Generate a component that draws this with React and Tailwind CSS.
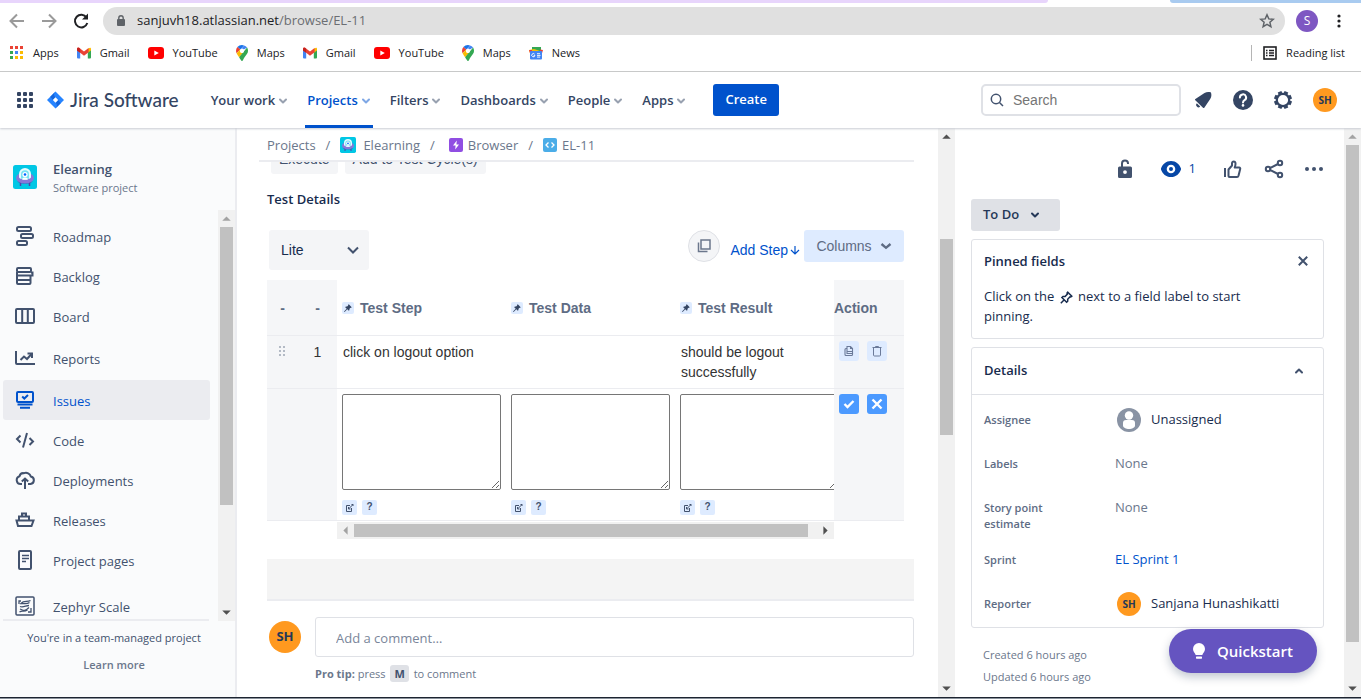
import React from 'react';

/* ---------- shared pieces ---------- */

function Svg({ size = 20, className = '', children, ...rest }) {
  return (
    <svg
      width={size}
      height={size}
      viewBox={`0 0 ${size} ${size}`}
      fill="none"
      stroke="currentColor"
      strokeWidth="2"
      aria-hidden="true"
      className={`shrink-0 ${className}`}
      {...rest}
    >
      {children}
    </svg>
  );
}

function Chevron({ className = '', up = false }) {
  return (
    <Svg size={10} className={className} strokeLinecap="round" strokeLinejoin="round">
      <path d={up ? 'M2 6.5 5 3.5 8 6.5' : 'M2 3.5 5 6.5 8 3.5'} />
    </Svg>
  );
}

function Arrow({ dir, dim }) {
  const points = { up: '4,10 12,10 8,6', down: '4,6 12,6 8,10', left: '10,4 10,12 6,8', right: '6,4 6,12 10,8' };
  return (
    <svg width="17" height="17" viewBox="0 0 16 16" className={dim ? 'shrink-0 text-[#a3a3a3]' : 'shrink-0 text-[#505050]'} aria-hidden="true">
      <polygon points={points[dir]} fill="currentColor" />
    </svg>
  );
}

function ScrollBar({ before, thumb, after, horizontal = false, dimStart = false }) {
  return (
    <div className={horizontal ? 'flex h-[17px] bg-[#f1f1f1]' : 'flex w-[17px] shrink-0 flex-col bg-[#f1f1f1]'}>
      <Arrow dir={horizontal ? 'left' : 'up'} dim={dimStart} />
      <div style={{ flexGrow: before }} />
      <div style={{ flexGrow: thumb }} className={horizontal ? 'my-0.5 bg-[#c1c1c1]' : 'mx-0.5 bg-[#c1c1c1]'} />
      <div style={{ flexGrow: after }} />
      <Arrow dir={horizontal ? 'right' : 'down'} />
    </div>
  );
}

function Ufo({ className }) {
  return (
    <svg viewBox="0 0 24 24" className={`shrink-0 ${className}`} aria-hidden="true">
      <rect width="24" height="24" rx="2.5" fill="#00c7e5" />
      <path d="M7.500 17v4M16.500 17v4" stroke="#5243aa" strokeWidth="1.500" />
      <ellipse cx="12" cy="13" rx="9" ry="5.500" fill="#8777d9" />
      <path d="M4.500 16c3 3.500 12 3.500 15 0-1 4-14 4-15 0z" fill="#5243aa" />
      <path d="M6 12.500V9a6 6 0 0 1 12 0v3.500c-2 2.800-10 2.800-12 0z" fill="#e6fcff" />
      <path d="M8 13.500V9.300a4 4 0 0 1 8 0v4.200c-2 1.200-6 1.200-8 0z" fill="#79e2f2" />
      <circle cx="12" cy="9.500" r="2.600" fill="#fff" />
      <circle cx="12" cy="9.500" r="1.300" fill="#0065ff" />
      <path d="M9 14.200c.5-2.200 5.500-2.200 6 0-1.500.8-4.500.8-6 0z" fill="#fff" />
    </svg>
  );
}

function Avatar({ className = 'size-6 text-[10px]' }) {
  return (
    <span className={`flex shrink-0 items-center justify-center rounded-full bg-[#ff991f] font-bold text-[#253858] ${className}`}>SH</span>
  );
}

/* ---------- browser chrome ---------- */

const GmailIcon = () => (
  <svg width="14" height="12" viewBox="0 0 14 11" aria-hidden="true">
    <path d="M0 1.500V10a1 1 0 0 0 1 1h2.200V5z" fill="#4285f4" />
    <path d="M14 1.500V10a1 1 0 0 1-1 1h-2.200V5z" fill="#34a853" />
    <path d="M10.800 1.200 13 .2c.6 0 1 .5 1 1.300v1.400L10.800 5.300z" fill="#fbbc04" />
    <path d="M0 2.900V1.500C0 .2 1.400-.3 2.400.5L7 4l4.600-3.500v4.200L7 8.200 3.200 5.300z" fill="#ea4335" />
    <path d="M0 2.900V1.500C0 .5 1 0 2 .3l1.200.9v4.100z" fill="#c5221f" />
  </svg>
);
const YouTubeIcon = () => (
  <svg width="16" height="12" viewBox="0 0 16 12" aria-hidden="true">
    <rect width="16" height="12" rx="3" fill="#f00" />
    <path d="M6.300 3.400v5.200L10.800 6z" fill="#fff" />
  </svg>
);
const MapsIcon = () => (
  <svg width="12" height="16" viewBox="0 0 12 16" aria-hidden="true">
    <path d="M6 0a6 6 0 0 0-4.600 2.100L4.300 4.500 8 .4A6 6 0 0 0 6 0z" fill="#1a73e8" />
    <path d="M1.400 2.100A6 6 0 0 0 .6 8.300L4.300 4.500z" fill="#ea4335" />
    <path d="M8 .4 4.300 4.500a2.300 2.300 0 0 1 3.500 0l3.300-1.900A6 6 0 0 0 8 .4z" fill="#4285f4" />
    <path d="M.6 8.300c.6 1.500 1.600 2.600 2.500 3.900l4.600-4.700a2.300 2.300 0 0 1-3.400-3z" fill="#fbbc04" />
    <path d="M11.100 2.600 3.100 12.200c1.300 1.900 2 3.800 2.900 3.800 1 0 1.200-2 2.700-4C10.200 9.900 12 8.400 12 6a6 6 0 0 0-.9-3.400z" fill="#34a853" />
    <circle cx="6" cy="6" r="2" fill="#fff" />
  </svg>
);
const NewsIcon = () => (
  <svg width="14" height="14" viewBox="0 0 14 14" aria-hidden="true">
    <rect x="3" y="1" width="9" height="5" fill="#34a853" />
    <path d="M0 4l5-1 6 2v2H1z" fill="#fbbc04" />
    <path d="M0 4l3 0v5H1.500zM11 3.500l3 .5-1.500 5H11z" fill="#ea4335" />
    <rect x="1" y="5" width="12" height="8.500" rx="1" fill="#4285f4" />
    <path d="M5.600 8.200a1.600 1.600 0 1 0 .3 1.400H4.700" stroke="#fff" fill="none" />
    <path d="M8 7.700h3M8 9.400h3.500M8 11.100h3" stroke="#fff" strokeWidth=".9" />
  </svg>
);
const AppsIcon = () => (
  <svg width="14" height="14" viewBox="0 0 14 14" aria-hidden="true">
    {['#ea4335', '#ea4335', '#ea4335', '#34a853', '#4285f4', '#fbbc04', '#34a853', '#fbbc04', '#fbbc04'].map((c, i) => (
      <rect key={i} x={(i % 3) * 5} y={Math.floor(i / 3) * 5} width="3" height="3" fill={c} />
    ))}
  </svg>
);

const BOOKMARKS = [
  ['Apps', AppsIcon],
  ['Gmail', GmailIcon],
  ['YouTube', YouTubeIcon],
  ['Maps', MapsIcon],
  ['Gmail', GmailIcon],
  ['YouTube', YouTubeIcon],
  ['Maps', MapsIcon],
  ['News', NewsIcon],
];

function BrowserChrome() {
  return (
    <div className="shrink-0 border-b border-[#c9c9c9] bg-white">
      <div className="flex h-[3px] justify-between">
        <div className="w-[77%] rounded-br-lg bg-[#e8d5fc]" />
        <div className="w-[14%] rounded-bl-lg bg-[#a9cbf0]" />
      </div>
      <div className="mt-1 flex h-7 items-center">
        <div className="flex w-[103px] shrink-0 gap-3 pl-[7px]">
          <button aria-label="Back" className="text-[#9a9a9a]">
            <Svg><path d="M17 10H4M10 3.500 3.500 10l6.500 6.500" /></Svg>
          </button>
          <button aria-label="Forward" className="text-[#9a9a9a]">
            <Svg><path d="M3 10h13M10 3.500l6.500 6.500-6.500 6.500" /></Svg>
          </button>
          <button aria-label="Reload" className="text-[#202124]">
            <Svg>
              <path d="M15.500 6.500A6.300 6.300 0 1 0 16.300 12" />
              <path d="M17 2.500v6h-6z" fill="currentColor" stroke="none" />
            </Svg>
          </button>
        </div>
        <div className="flex h-7 flex-1 items-center rounded-full bg-[#e0e0e0] px-2.5 text-[13px] text-[#6b6e72]">
          <Svg size={16} className="mr-2 text-[#5f6368]">
            <rect x="4" y="6" width="8" height="7" rx="1" fill="currentColor" stroke="none" />
            <path d="M5.800 7V5a2.200 2.200 0 0 1 4.400 0v2" strokeWidth="1.400" />
          </Svg>
          <span className="text-[#202124]">sanjuvh18.atlassian.net</span>/browse/EL-11
          <button aria-label="Bookmark this page" className="ml-auto text-[#5f6368]">
            <Svg size={16} strokeWidth="1.500">
              <path d="M8 1.800l1.800 4.100 4.500.4-3.400 3 1 4.400L8 11.400l-3.900 2.300 1-4.400-3.400-3 4.500-.4z" />
            </Svg>
          </button>
        </div>
        <div className="flex w-[76px] shrink-0 items-center pl-[11px]">
          <span className="flex size-[22px] items-center justify-center rounded-full bg-[#7e57c2] text-xs text-white">S</span>
          <button aria-label="Menu" className="ml-[13px] text-[#202124]">
            <Svg size={16}>
              <g fill="currentColor" stroke="none"><circle cx="8" cy="3" r="1.600" /><circle cx="8" cy="8" r="1.600" /><circle cx="8" cy="13" r="1.600" /></g>
            </Svg>
          </button>
        </div>
      </div>
      <div className="flex h-9 items-center pr-4 pl-2.5 text-[11px] text-[#202124]">
        <div className="flex items-center gap-[18px]">
          {BOOKMARKS.map(([name, Icon], i) => (
            <a key={i} href="#" className="flex items-center gap-[9px]"><Icon />{name}</a>
          ))}
        </div>
        <div className="ml-auto flex h-4 items-center border-l border-[#b5b5b5] pl-[11px]">
          <Svg size={14} className="mr-[9px]">
            <rect x="1" y="1" width="12" height="12" strokeWidth="1.600" />
            <path d="M3 4.500h1.500M3 7h1.500M3 9.500h1.500M6 4.500h5M6 7h5M6 9.500h5" strokeWidth="1.300" />
          </Svg>
          Reading list
        </div>
      </div>
    </div>
  );
}

/* ---------- product header ---------- */

function Header() {
  return (
    <header className="relative z-10 flex h-14 shrink-0 items-center bg-white pr-6 pl-[17px] text-[#344563] shadow-[0_1px_2px_#c9ccd4]">
      <button aria-label="Switch product">
        <svg width="16" height="16" viewBox="0 0 16 16" fill="currentColor" aria-hidden="true">
          {[0, 6, 12].map((y) => [0, 6, 12].map((x) => <rect key={`${x}-${y}`} x={x} y={y} width="4" height="4" rx="1" />))}
        </svg>
      </button>
      <a href="#" className="ml-3.5 flex items-center gap-1.5 font-[Lato] text-[19px] leading-6 font-medium text-[#344563]">
        <svg width="17" height="18" viewBox="0 0 18 18" aria-hidden="true">
          <path d="M9 0 18 9 9 18 0 9z" fill="#2684ff" />
          <path d="M9 0a4.500 4.500 0 0 0 0 6.300L6.300 9 3.500 5.500z" fill="#1466dd" />
          <path d="M9 18a4.500 4.500 0 0 0 0-6.300L11.700 9l2.800 3.500z" fill="#1466dd" />
          <path d="M9 6.200 11.800 9 9 11.800 6.200 9z" fill="#fff" />
        </svg>
        Jira Software
      </a>
      <nav className="ml-8 flex h-full gap-[19px] text-[13px] font-semibold">
        {['Your work', 'Projects', 'Filters', 'Dashboards', 'People', 'Apps'].map((name) => (
          <button
            key={name}
            className={
              name === 'Projects'
                ? '-mx-0.5 flex items-center gap-[3px] border-b-[3px] border-[#0052cc] px-0.5 pt-1 text-[#0052cc]'
                : 'flex items-center gap-[3px] pt-px'
            }
          >
            {name}
            <Chevron className="opacity-50" />
          </button>
        ))}
      </nav>
      <button className="ml-[27px] h-8 rounded-[3px] bg-[#0052cc] px-3 text-[13px] font-semibold text-white">Create</button>
      <label className="mr-0.5 ml-auto flex h-8 w-[200px] items-center gap-2 rounded-[5px] border-2 border-[#dfe1e6] px-1.5">
        <Svg size={16} strokeWidth="1.500" className="text-[#42526e]">
          <circle cx="7" cy="7" r="4.700" /><path d="M10.500 10.500 14 14" />
        </Svg>
        <input aria-label="Search" placeholder="Search" className="w-full font-['Liberation_Sans',sans-serif] text-sm outline-none placeholder:text-[#757575]" />
      </label>
      <button aria-label="Notifications" className="flex w-10 justify-center">
        <Svg size={24}>
          <g fill="currentColor" stroke="none">
            <path d="M4.300 12.200c-.4-.4-.4-.9.100-1.200L13.500 5c2-1.200 4-1.200 6-.8.4.100.6.300.6.700.5 2 .4 4-.9 6L13.300 19.700c-.3.500-.9.500-1.300.1z" />
            <path d="M5.800 15.200a2.400 2.400 0 0 0 3.400 3.400z" />
          </g>
        </Svg>
      </button>
      <button aria-label="Help" className="flex w-10 justify-center">
        <Svg size={24}>
          <circle cx="12" cy="12" r="10" fill="currentColor" stroke="none" />
          <path d="M8.900 9.500a3.100 3.100 0 1 1 4.600 2.700c-1 .6-1.500 1-1.500 2.300" stroke="#fff" strokeLinecap="round" />
          <circle cx="12" cy="17.400" r="1.300" fill="#fff" stroke="none" />
        </Svg>
      </button>
      <button aria-label="Settings" className="flex w-10 justify-center">
        <Svg size={24}>
          <circle cx="12" cy="12" r="6.200" strokeWidth="2.200" />
          <g strokeWidth="4">
            {[22.5, 67.5, 112.5, 157.5, 202.5, 247.5, 292.5, 337.5].map((a) => (
              <path key={a} d="M12 5.600V3" transform={`rotate(${a} 12 12)`} />
            ))}
          </g>
        </Svg>
      </button>
      <button aria-label="Your profile" className="ml-2.5"><Avatar /></button>
    </header>
  );
}

/* ---------- sidebar ---------- */

const ICONS = {
  Roadmap: (<><rect x="2" y="1" width="14" height="4" rx="1.500" /><rect x="6" y="8" width="12" height="4" rx="1.500" /><rect x="2" y="15" width="10" height="4" rx="1.500" /></>),
  Backlog: (<><rect x="2" y="2" width="14" height="4" rx="1" /><path d="M2 6v3.500h15.500V6.500H16" /><path d="M2 9.500v7.500a1 1 0 0 0 1 1h11.500a1 1 0 0 0 1-1V9.500M2 14h14" /></>),
  Board: (<><rect x="1" y="3" width="18" height="14" rx="1" /><path d="M7.200 3v14M12.800 3v14" /></>),
  Reports: (<><path d="M1 3v12a1 1 0 0 0 1 1h18" /><path d="M5.500 12 9 8.500l3 2.500 5-5.500" /><path d="M12.500 5.500H17V10" /></>),
  Issues: (<><rect x="2" y="2" width="16" height="10" rx="1" /><path d="M7.200 6.500 9.300 8.500 13 5" /><path d="M2.500 14.500h15M5 17.800h10" /></>),
  Code: (<><path d="M5.500 5.500 2 9l3.500 3.500M14.500 8l3.500 3.500-3.500 3.500M12 3 8 17.500" /></>),
  Deployments: (<><path d="M7 14H5.500a4 4 0 0 1-1-7.800A4 4 0 0 1 9 3.200a5 5 0 0 1 6.800 3.300A3.800 3.800 0 0 1 15.500 14H13" /><path d="M10 19V9M6.800 11.500 10 8.500l3.200 3" /></>),
  Releases: (<><path d="M1.500 10.500h17l-2 5.500H3z" /><path d="M4 10V6.500h10V10M7 6.500V3.500h4v3" /></>),
  'Project pages': (<><rect x="4" y="1" width="12" height="18" rx="1" /><path d="M7 5.500h7M7 8.500h7M7 11.500h4" strokeWidth="1.600" /></>),
  'Zephyr Scale': (<><rect x="1" y="1" width="18" height="18" rx="1" strokeWidth="1.500" /><path d="M4 8V5h2M16 12v4h-3" strokeWidth="1.300" /><path d="M15.500 4.500C12 6.500 9 4 6 7.500c3 0 6 1 8.500-1M5 10.500c3 1.500 6-1 9-1M5 13c3 1 4 3.500 9-1.500M4.500 16c3-2 4 .5 8-2" strokeWidth="1.300" /></>),
};

function NavItem({ name, active }) {
  return (
    <a
      href="#"
      className={`ml-[3px] flex h-10 shrink-0 items-center gap-[18px] rounded-[3px] pl-3 text-[13px] ${active ? 'bg-[#ebecf0] text-[#0052cc]' : 'text-[#42526e]'}`}
    >
      <Svg>{ICONS[name]}</Svg>
      <span className="pt-[3px]">{name}</span>
    </a>
  );
}

function Sidebar() {
  return (
    <aside className="flex w-[237px] shrink-0 flex-col border-r-2 border-[#ebecf0] bg-[#fafbfc]">
      <div className="flex h-[82px] items-end gap-4 pb-3 pl-[13px]">
        <Ufo className="mb-[9px] size-6" />
        <div className="pb-0.5">
          <div className="mb-px text-[13px] leading-5 font-semibold text-[#42526e]">Elearning</div>
          <div className="text-[11px] leading-4 text-[#6b778c]">Software project</div>
        </div>
      </div>
      <div className="flex min-h-0 flex-1">
        <nav className="mr-2 flex flex-1 flex-col gap-0.5 overflow-hidden pt-1.5">
          <div>{['Roadmap', 'Backlog', 'Board'].map((n) => <NavItem key={n} name={n} />)}</div>
          <div><NavItem name="Reports" /></div>
          <div>{['Issues', 'Code', 'Deployments', 'Releases', 'Project pages'].map((n) => <NavItem key={n} name={n} active={n === 'Issues'} />)}</div>
          <div className="pt-1"><NavItem name="Zephyr Scale" /></div>
        </nav>
        <ScrollBar before={0} thumb={278} after={99} dimStart />
      </div>
      <div className="-mt-0.5 mr-[26px] ml-[3px] h-[78px] shrink-0 border-t-2 border-[#ebecf0] pt-2 pl-4 text-center text-[11px] leading-[18px] text-[#42526e]">
        You're in a team-managed project
        <a href="#" className="mt-[9px] block font-semibold text-[#6b778c]">Learn more</a>
      </div>
    </aside>
  );
}

/* ---------- test steps ---------- */

function PinBadge() {
  return (
    <span className="flex size-3 items-center justify-center rounded-[2px] bg-[#deebff] text-[#344563]">
      <svg width="8" height="8" viewBox="0 0 8 8" fill="currentColor" aria-hidden="true">
        <path d="M4.800.3 7.700 3.200 6.900 4l-.5-.2-1 1.200.1 1.100-.7.700-1.500-1.500L.6 7.900 0 7.400l2.700-2.700L1.200 3.200l.7-.7 1.200.1 1.100-1L4 1.100z" />
      </svg>
    </span>
  );
}

function Step({ label }) {
  return (
    <div className="flex items-center gap-1.5">
      <PinBadge />
      {label}
    </div>
  );
}

function DraftCell({ label }) {
  return (
    <td className="overflow-hidden border-b border-[#ebecf0] pt-[5px] pl-[5px] align-top">
      <textarea aria-label={label} className="block h-24 w-[159px] max-w-none resize rounded-[2px] border border-[#767676] bg-white p-1" />
      <div className="mt-2.5 flex gap-[5px]">
        <button aria-label={`Expand ${label}`} className="flex size-[15px] items-center justify-center rounded-[2px] bg-[#deebff] text-[#42526e]">
          <Svg size={9} strokeWidth="1">
            <path d="M5 2.500H1.500v6h5V5" /><path d="M3.500 6 8 1.500M3.500 4v2h2M6.500 1.500H8V3" />
          </Svg>
        </button>
        <button aria-label={`Help for ${label}`} className="flex size-[15px] items-center justify-center rounded-[2px] bg-[#deebff] font-['Liberation_Sans',sans-serif] text-[10px] font-bold text-[#42526e]">?</button>
      </div>
    </td>
  );
}

function StepsTable() {
  const side = 'border-b border-[#ebecf0] bg-[#f5f6f8]';
  const mid = 'border-b border-[#ebecf0]';
  const soft = 'flex size-5 items-center justify-center rounded-[3px] bg-[#deebff] text-[#6b7a99]';
  const strong = 'flex size-5 items-center justify-center rounded-[3px] bg-[#4c9aff] text-white';
  return (
    <div className="mt-2.5 mr-2.5 font-['Liberation_Sans',sans-serif] text-sm">
      <table className="w-full table-fixed border-separate border-spacing-0 text-left">
        <colgroup>
          <col className="w-[35px]" /><col className="w-[35px]" /><col className="w-[169px]" /><col className="w-[169px]" /><col /><col className="w-[70px]" />
        </colgroup>
        <thead>
          <tr className="h-14 text-[#5e6c84]">
            <th className={`${side} pr-1 text-center`}>-</th>
            <th className={`${side} pl-0 pr-1 text-center`}>-</th>
            <th className={`${mid} pl-[5px]`}><Step label="Test Step" /></th>
            <th className={`${mid} pl-[5px]`}><Step label="Test Data" /></th>
            <th className={`${mid} pl-[5px]`}><Step label="Test Result" /></th>
            <th className={side}>Action</th>
          </tr>
        </thead>
        <tbody>
          <tr className="h-[53px] align-top leading-5 text-[#333]">
            <td className={`${side} pt-2.5 pl-3`}>
              <svg width="7" height="11" viewBox="0 0 7 11" fill="#b3bac5" aria-hidden="true">
                {[0, 4, 8].map((y) => [0, 4].map((x) => <rect key={`${x}-${y}`} x={x} y={y} width="2" height="2" />))}
              </svg>
            </td>
            <td className={`${side} pt-1.5 pr-1 text-center`}>1</td>
            <td className={`${mid} pt-1.5 pl-1.5`}>click on logout option</td>
            <td className={mid} />
            <td className={`${mid} pt-1.5 pl-1.5`}>should be logout<br />successfully</td>
            <td className={`${side} pt-[5px] pl-[5px]`}>
              <div className="flex gap-2">
                <button aria-label="Clone step" className={soft}>
                  <Svg size={12} strokeWidth="1.100">
                    <path d="M4 1.500h3.500l2 2V8.500H4zM7.500 1.500v2h2" /><path d="M4 3.500H3a1 1 0 0 0-1 1v5a1 1 0 0 0 1 1h5.500a1 1 0 0 0 1-1v-1M4 6.500h5.500" />
                  </Svg>
                </button>
                <button aria-label="Delete step" className={soft}>
                  <Svg size={12} strokeWidth="1">
                    <path d="M1.500 2.500h9M4.500 2.500v-1h3v1M2.500 2.500v7.500a1 1 0 0 0 1 1h5a1 1 0 0 0 1-1V2.500" />
                  </Svg>
                </button>
              </div>
            </td>
          </tr>
          <tr className="h-[132px] align-top">
            <td className={side} />
            <td className={side} />
            <DraftCell label="Test Step" />
            <DraftCell label="Test Data" />
            <DraftCell label="Test Result" />
            <td className={`${side} pt-[5px] pl-[5px]`}>
              <div className="flex gap-2">
                <button aria-label="Save step" className={strong}>
                  <Svg size={12} strokeWidth="2.400"><path d="M1.500 6 4.500 9l6-6" /></Svg>
                </button>
                <button aria-label="Discard step" className={strong}>
                  <Svg size={12} strokeWidth="2.400"><path d="M1.500 1.500l9 9M10.500 1.500l-9 9" /></Svg>
                </button>
              </div>
            </td>
          </tr>
        </tbody>
      </table>
      <div className="mx-[70px] mt-px"><ScrollBar horizontal before={0} thumb={454} after={9} dimStart /></div>
    </div>
  );
}

function Main() {
  const arial = "font-['Liberation_Sans',sans-serif]";
  return (
    <main className="flex min-w-0 flex-1">
      <div className="min-w-0 flex-1 overflow-hidden pr-6 pl-[22px]">
        <div className="flex h-[34px] items-center border-b-2 border-[#ebecf0] pt-0.5 pl-2 text-[13px] leading-5 text-[#6b778c]">
          <a href="#">Projects</a>
          <span className="mx-2.5">/</span>
          <a href="#" className="flex items-center gap-[7px]"><Ufo className="size-4" />Elearning</a>
          <span className="mr-3.5 ml-2.5">/</span>
          <a href="#" className="flex items-center gap-[5px]">
            <svg width="14" height="14" viewBox="0 0 14 14" aria-hidden="true">
              <rect width="14" height="14" rx="2" fill="#904ee2" /><path d="M7.800 2.500 4 7.500h2.600L6.200 11.500 10 6.500H7.400z" fill="#fff" />
            </svg>
            Browser
          </a>
          <span className="mx-2.5">/</span>
          <a href="#" className="flex items-center gap-[5px]">
            <svg width="14" height="14" viewBox="0 0 14 14" fill="none" stroke="#fff" strokeWidth="1.300" aria-hidden="true">
              <rect width="14" height="14" rx="2" fill="#4bade8" stroke="none" /><path d="M5.500 4.500 3 7l2.500 2.500M8.500 4.500 11 7 8.500 9.500" />
            </svg>
            EL-11
          </a>
        </div>
        <div className="pl-2">
          <div className={`flex h-3 items-end gap-[7px] overflow-hidden pl-1 text-sm leading-5 text-[#42526e] ${arial}`}>
            <button className="h-8 shrink-0 rounded-[3px] bg-[#f4f5f7] px-2 pt-0.5">Execute</button>
            <button className="h-8 shrink-0 rounded-[3px] bg-[#f4f5f7] px-2 pt-0.5">Add to Test Cycle(s)</button>
          </div>
          <h2 className="mt-[15px] text-[13px] leading-5 font-semibold text-[#172b4d]">Test Details</h2>
          <div className={`mt-[21px] mr-2.5 ml-0.5 flex h-10 items-start text-sm ${arial}`}>
            <div className="grid h-10 w-[100px] items-center">
              <select aria-label="View" className="col-start-1 row-start-1 h-10 w-full appearance-none rounded-[3px] bg-[#f4f5f7] pl-3 text-[#172b4d]">
                <option>Lite</option>
              </select>
              <Svg size={14} className="pointer-events-none col-start-1 row-start-1 mr-[9px] justify-self-end text-[#42526e]"><path d="M2 4.500 7 9.500l5-5" /></Svg>
            </div>
            <button aria-label="Copy steps" className="ml-auto flex size-8 items-center justify-center rounded-full border border-[#dfe1e6] bg-[#f4f5f7] text-[#6b778c]">
              <Svg size={14} strokeWidth="1.500"><rect x="4" y="1" width="9" height="9" /><path d="M1.500 3.500V12.500h9" /></Svg>
            </button>
            <a href="#" className="mt-2.5 ml-2.5 flex items-center gap-0.5 leading-5 text-[#0052cc]">
              Add Step
              <Svg size={10} strokeWidth="1.200"><path d="M5 1v8M1 5l4 4 4-4" /></Svg>
            </a>
            <button className="ml-1 flex h-8 w-[100px] items-center justify-center gap-2 rounded-[3px] bg-[#deebff] text-[#5e6c84]">
              Columns
              <Svg size={12} strokeWidth="2.400"><path d="M1.500 4 6 7.800 10.500 4" /></Svg>
            </button>
          </div>
          <StepsTable />
          <div className="mt-5 h-[42px] border-b-2 border-[#ebecf0] bg-[#f4f4f4]" />
          <div className="mt-4 flex items-center gap-3.5 pl-0.5">
            <Avatar className="size-8 text-[13px]" />
            <input
              aria-label="Add a comment"
              placeholder="Add a comment…"
              className="h-10 min-w-0 flex-1 rounded-[3px] border border-[#dfe1e6] px-5 pt-0.5 text-[13px] placeholder:text-[#7a869a]"
            />
          </div>
          <p className="mt-2 pl-12 text-[11px] leading-[18px] text-[#6b778c]">
            <b className="font-bold">Pro tip:</b> press <kbd className="mx-0.5 rounded-[3px] bg-[#dfe1e6] px-1 py-px font-['Open_Sans',sans-serif] font-bold text-[#42526e]">M</kbd> to comment
          </p>
        </div>
      </div>
      <ScrollBar before={94} thumb={196} after={245} />
    </main>
  );
}

/* ---------- issue context panel ---------- */

function Field({ label, className = 'h-11', children }) {
  return (
    <div className={`flex items-start px-3 ${className}`}>
      <dt className="w-[131px] shrink-0 pr-12 pt-3.5 text-[11px] leading-4 font-semibold text-[#5e6c84]">{label}</dt>
      <dd className="flex h-11 items-center text-[13px]">{children}</dd>
    </div>
  );
}

function Panel() {
  return (
    <aside className="relative flex w-[406px] shrink-0">
      <div className="min-w-0 flex-1 overflow-hidden pt-[29px] pr-5 pl-4">
        <div className="flex h-6 items-center justify-end text-[#42526e]">
          <button aria-label="Lock issue">
            <Svg size={24}>
              <path d="M5 11a1.500 1.500 0 0 1 1.500-1.500h11A1.500 1.500 0 0 1 19 11v8.500a1.500 1.500 0 0 1-1.500 1.500h-11A1.500 1.500 0 0 1 5 19.500zm7 2.200a1.900 1.900 0 1 0 0 3.800 1.900 1.900 0 0 0 0-3.800z" fill="currentColor" stroke="none" fillRule="evenodd" />
              <path d="M9 10V6.500a3 3 0 0 1 6 0V7" />
            </Svg>
          </button>
          <button className="ml-[22px] flex items-center gap-1.5 text-[13px] text-[#0747a6]" aria-label="1 watcher">
            <Svg size={24}>
              <path d="M12 4c5 0 8.500 3.300 10 7.600v.8C20.500 16.700 17 20 12 20S3.500 16.700 2 12.400v-.8C3.500 7.300 7 4 12 4zm0 3.700a4.300 4.300 0 1 0 0 8.600 4.300 4.300 0 0 0 0-8.600z" fill="currentColor" stroke="none" fillRule="evenodd" />
              <circle cx="12" cy="12" r="2" fill="currentColor" stroke="none" />
            </Svg>
            1
          </button>
          <button aria-label="Vote" className="ml-6">
            <Svg size={24} strokeLinejoin="round">
              <path d="M5 11v9" /><path d="M8.500 12.500 12 8.500V6a1.800 1.800 0 0 1 3.500 0c.2 1.500-.2 3-.8 4.500h4.500c.8 0 1.300.7 1 1.500l-1.700 6.800c-.2.700-.8 1.200-1.500 1.200H9.500a1 1 0 0 1-1-1z" />
            </Svg>
          </button>
          <button aria-label="Share" className="ml-[18px]">
            <Svg size={24}><circle cx="6" cy="12" r="2.200" /><circle cx="18" cy="6" r="2.200" /><circle cx="18" cy="18" r="2.200" /><path d="M8 11 16 7M8 13l8 4" /></Svg>
          </button>
          <button aria-label="Actions" className="-mr-0.5 ml-4">
            <Svg size={24}><g fill="currentColor" stroke="none"><circle cx="5" cy="12" r="2" /><circle cx="12" cy="12" r="2" /><circle cx="19" cy="12" r="2" /></g></Svg>
          </button>
        </div>
        <button className="mt-[18px] flex h-8 w-[89px] items-center gap-[11px] rounded-[3px] bg-[#dfe1e6] pl-3 text-[13px] font-semibold text-[#253858]">
          To Do
          <Chevron />
        </button>
        <section className="mt-2 h-[100px] rounded-[3px] border border-[#dfe1e6] px-3 pt-[9px] text-[#172b4d]">
          <div className="flex items-center justify-between">
            <h3 className="text-[13px] leading-6 font-semibold">Pinned fields</h3>
            <button aria-label="Close" className="mr-[3px] text-[#42526e]"><Svg size={10}><path d="M.8.8l8.400 8.400M9.200.8.8 9.200" /></Svg></button>
          </div>
          <p className="mt-[13px] pr-10 text-[13px] leading-5">
            Click on the{' '}
            <svg width="13" height="13" viewBox="0 0 13 13" fill="none" stroke="currentColor" strokeWidth="1.500" className="mx-0.5 inline" aria-hidden="true">
              <path d="M7.800 1.200 11.800 5.200 10.800 6 10 5.800 7.700 8.200v2L6.600 11.300 1.900 6.500 3 5.400l2.100.1L7.400 3 7 2.100zM4 9 .8 12.200" />
            </svg>{' '}
            next to a field label to start pinning.
          </p>
        </section>
        <section className="mt-2 rounded-[3px] border border-[#dfe1e6] pb-px text-[#172b4d]">
          <button className="mb-[3px] flex h-[47px] w-full items-center justify-between border-b border-[#dfe1e6] pr-[19px] pl-3 text-[13px] font-semibold">
            Details
            <Chevron up className="text-[#42526e]" />
          </button>
          <dl>
            <Field label="Assignee">
              <svg width="24" height="24" viewBox="0 0 24 24" className="mr-2.5 ml-0.5" aria-hidden="true">
                <circle cx="12" cy="12" r="12" fill="#8993a4" /><circle cx="12" cy="7.500" r="4.200" fill="#fff" />
                <path d="M6 15a3 3 0 0 1 3-3h6a3 3 0 0 1 3 3v2.500c0 2-3 3.500-6 3.500s-6-1.500-6-3.500z" fill="#fff" />
              </svg>
              Unassigned
            </Field>
            <Field label="Labels"><span className="text-[#6b778c]">None</span></Field>
            <Field label="Story point estimate" className="h-[52px]"><span className="text-[#6b778c]">None</span></Field>
            <Field label="Sprint"><a href="#" className="text-[#0052cc]">EL Sprint 1</a></Field>
            <Field label="Reporter"><Avatar className="mr-2.5 ml-0.5 size-6 text-[10px]" />Sanjana Hunashikatti</Field>
          </dl>
        </section>
        <div className="mt-4 pl-3 text-[11px] leading-[22px] text-[#6b778c]">
          <p>Created 6 hours ago</p>
          <p>Updated 6 hours ago</p>
        </div>
      </div>
      <ScrollBar before={0} thumb={497} after={38} dimStart />
      <button className="absolute right-11 bottom-6 flex h-11 w-[148px] items-center gap-3 rounded-full bg-[#6554c0] pl-6 text-[15px] font-semibold text-white shadow-[0_4px_10px_#091e4240]">
        <svg width="12" height="16" viewBox="0 0 12 16" fill="currentColor" aria-hidden="true">
          <path d="M6 0a6 6 0 0 1 6 6c0 2.800-2 3.600-2.700 6H2.700C2 9.600 0 8.800 0 6a6 6 0 0 1 6-6z" /><rect x="3" y="13.500" width="6" height="2.200" rx=".6" />
        </svg>
        Quickstart
      </button>
    </aside>
  );
}

export default function App() {
  return (
    <div className="flex h-screen flex-col overflow-hidden bg-white font-['Open_Sans','Noto_Sans',sans-serif]">
      <BrowserChrome />
      <Header />
      <div className="flex min-h-0 flex-1">
        <Sidebar />
        <Main />
        <Panel />
      </div>
      <div className="h-0.5 shrink-0 border-t border-[#1d2430] bg-[#8a929c]" />
    </div>
  );
}
